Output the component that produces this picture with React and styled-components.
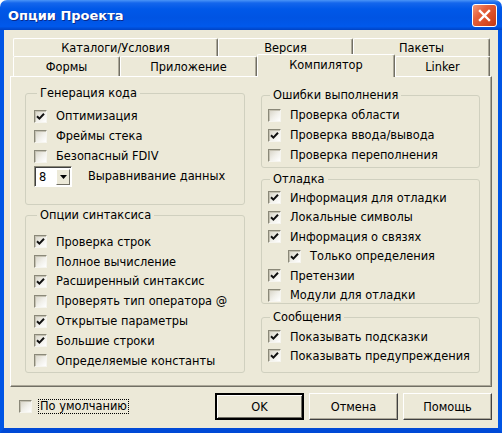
import React from 'react';
import styled, { createGlobalStyle } from 'styled-components';

const Global = createGlobalStyle`
  html, body { margin: 0; padding: 0; background: #ffffff; }
  body {
    font-family: "DejaVu Sans", "Noto Sans", sans-serif;
    font-size: 11.4px;
    color: #000;
  }
  * { box-sizing: border-box; }
`;

const Window = styled.div`
  width: 502px;
  height: 433px;
  display: flex;
  flex-direction: column;
`;

const TitleBar = styled.div`
  height: 30px;
  flex: none;
  display: flex;
  align-items: center;
  justify-content: space-between;
  padding: 0 5px 0 8px;
  border-radius: 7px 7px 0 0;
  background: linear-gradient(
    to bottom,
    #4a94f7 0%,
    #1466ec 10%,
    #0058e8 30%,
    #0054e3 60%,
    #0059ec 88%,
    #0043c4 100%
  );
`;

const Title = styled.span`
  color: #fff;
  font-family: "DejaVu Sans", sans-serif;
  font-weight: bold;
  font-size: 13px;
  text-shadow: 1px 1px 0 #0b2a8a;
`;

const CloseBtn = styled.div`
  width: 25px;
  height: 23px;
  border: 1px solid #fff;
  border-radius: 3px;
  display: flex;
  align-items: center;
  justify-content: center;
  background: linear-gradient(135deg, #f39a7c 0%, #e5613d 35%, #d84a22 70%, #c23a17 100%);
`;

const Frame = styled.div`
  flex: 1;
  display: flex;
  flex-direction: column;
  background: #ece9d8;
  border-left: 4px solid #0055e5;
  border-right: 4px solid #0055e5;
  border-bottom: 5px solid #0049d6;
  padding: 8px 6px 0 6px;
`;

const TabRow = styled.div`
  display: flex;
  height: ${(p) => p.$h}px;
  padding: 0 2px 0 3px;
`;

const Tab = styled.div`
  width: ${(p) => p.$w}px;
  height: ${(p) => p.$h}px;
  display: flex;
  align-items: center;
  justify-content: center;
  background: #ece9d8;
  border-top: 1px solid #fff;
  border-left: 1px solid #fff;
  border-right: 1px solid #716f64;
  box-shadow: inset -1px 0 0 #aca899;
  border-radius: 2px 2px 0 0;
  white-space: nowrap;
`;

const ActiveTab = styled(Tab)`
  align-self: flex-start;
  height: 23px;
  margin-top: -2px;
  padding-bottom: 3px;
  position: relative;
  z-index: 1;
`;

const Page = styled.div`
  height: 311px;
  border: 1px solid;
  border-color: #fff #716f64 #716f64 #fff;
  box-shadow: inset -1px -1px 0 #aca899;
  display: grid;
  grid-template-columns: 220px 219px;
  column-gap: 16px;
  padding: 9px 11px 0 14px;
`;

const Column = styled.div`
  display: flex;
  flex-direction: column;
  gap: ${(p) => p.$gap}px;
  padding-top: ${(p) => p.$top || 0}px;
`;

const Group = styled.fieldset`
  margin: 0;
  margin-top: ${(p) => p.$mt || 0}px;
  padding: 0;
  min-width: 0;
  height: ${(p) => p.$h}px;
  border: 1px solid #d0d0bf;
  border-radius: 3px;
`;

const Legend = styled.legend`
  padding: 0 3px;
  margin-left: ${(p) => p.$ml}px;
  line-height: 14px;
`;

const GroupBody = styled.div`
  display: flex;
  flex-direction: column;
  padding: ${(p) => p.$pt}px 0 0 ${(p) => p.$pl}px;
`;

const Row = styled.div`
  display: flex;
  align-items: center;
  height: ${(p) => p.$h}px;
  padding-left: ${(p) => p.$indent || 0}px;
  gap: ${(p) => p.$gap || 9}px;
  white-space: nowrap;
`;

const Box = styled.span`
  width: 13px;
  height: 13px;
  flex: none;
  display: flex;
  align-items: center;
  justify-content: center;
  border: 1px solid;
  border-color: #8a8878 #f6f5ef #f6f5ef #8a8878;
  box-shadow: inset 1px 1px 0 #c4c1b2;
  background: linear-gradient(135deg, #d6d3c5 0%, #f1f0ea 55%, #ffffff 100%);
`;

const Combo = styled.div`
  width: 38px;
  height: 21px;
  flex: none;
  display: flex;
  align-items: stretch;
  background: #fff;
  border: 1px solid;
  border-color: #8a8878 #fff #fff #8a8878;
  box-shadow: inset 1px 1px 0 #404040;
  padding: 2px 1px 1px 2px;
`;

const ComboText = styled.span`
  flex: 1;
  display: flex;
  align-items: center;
  padding-left: 2px;
`;

const ComboBtn = styled.span`
  width: 14px;
  display: flex;
  align-items: center;
  justify-content: center;
  background: #ece9d8;
  border: 1px solid;
  border-color: #fff #716f64 #716f64 #fff;
`;

const ComboLabel = styled.span`
  margin-left: 7px;
  padding-bottom: 2px;
`;

const Footer = styled.div`
  flex: 1;
  display: flex;
  align-items: flex-start;
  padding: 6px 0 0 9px;
`;

const FooterCheck = styled.div`
  height: 27px;
  display: flex;
  align-items: center;
  gap: 6px;
`;

const FocusLabel = styled.span`
  border: 1px dotted #000;
  padding: 0 1px;
  line-height: 13px;
`;

const Buttons = styled.div`
  margin-left: auto;
  display: flex;
  gap: 5px;
`;

const Button = styled.div`
  width: 89px;
  height: 27px;
  display: flex;
  align-items: center;
  justify-content: center;
  background: #ece9d8;
  border: 1px solid;
  border-color: #fff #404040 #404040 #fff;
  box-shadow: inset -1px -1px 0 #aca899;
`;

const DefaultButton = styled(Button)`
  border: 2px solid #000;
  box-shadow: inset 1px 1px 0 #fff, inset -1px -1px 0 #716f64;
`;

function Check({ checked }) {
  return (
    <Box>
      {checked && (
        <svg width="9" height="9" viewBox="0 0 9 9">
          <path d="M1 4.2 L3.4 6.6 L8 1.8" stroke="#111" strokeWidth="2" fill="none" />
        </svg>
      )}
    </Box>
  );
}

function Item({ checked, children, h, indent }) {
  return (
    <Row $h={h} $indent={indent}>
      <Check checked={checked} />
      <span>{children}</span>
    </Row>
  );
}

const codeGen = [
  ['Оптимизация', true],
  ['Фреймы стека', false],
  ['Безопасный FDIV', false],
];

const syntax = [
  ['Проверка строк', true],
  ['Полное вычисление', false],
  ['Расширенный синтаксис', true],
  ['Проверять тип оператора @', false],
  ['Открытые параметры', true],
  ['Большие строки', true],
  ['Определяемые константы', false],
];

const runtime = [
  ['Проверка области', false],
  ['Проверка ввода/вывода', true],
  ['Проверка переполнения', false],
];

const debug = [
  ['Информация для отладки', true, 0],
  ['Локальные символы', true, 0],
  ['Информация о связях', true, 0],
  ['Только определения', true, 20],
  ['Претензии', true, 0],
  ['Модули для отладки', false, 0],
];

const messages = [
  ['Показывать подсказки', true],
  ['Показывать предупреждения', true],
];

export default function App() {
  return (
    <Window>
      <Global />
      <TitleBar>
        <Title>Опции Проекта</Title>
        <CloseBtn>
          <svg width="13" height="13" viewBox="0 0 13 13">
            <path d="M2 2 L11 11 M11 2 L2 11" stroke="#fff" strokeWidth="2.4" strokeLinecap="square" />
          </svg>
        </CloseBtn>
      </TitleBar>
      <Frame>
        <TabRow $h={18}>
          <Tab $w={205} $h={18}>Каталоги/Условия</Tab>
          <Tab $w={135} $h={18}>Версия</Tab>
          <Tab $w={137} $h={18}>Пакеты</Tab>
        </TabRow>
        <TabRow $h={20}>
          <Tab $w={107} $h={20}>Формы</Tab>
          <Tab $w={137} $h={20}>Приложение</Tab>
          <ActiveTab $w={138}>Компилятор</ActiveTab>
          <Tab $w={95} $h={20}>Linker</Tab>
        </TabRow>
        <Page>
          <Column $gap={3}>
            <Group $h={119}>
              <Legend $ml={11}>Генерация кода</Legend>
              <GroupBody $pt={6} $pl={8}>
                {codeGen.map(([t, c]) => (
                  <Item key={t} checked={c} h={20}>{t}</Item>
                ))}
                <Row $h={21} $gap={9}>
                  <Combo>
                    <ComboText>8</ComboText>
                    <ComboBtn>
                      <svg width="7" height="4" viewBox="0 0 7 4">
                        <path d="M0 0 H7 L3.5 4 Z" fill="#000" />
                      </svg>
                    </ComboBtn>
                  </Combo>
                  <ComboLabel>Выравнивание данных</ComboLabel>
                </Row>
              </GroupBody>
            </Group>
            <Group $h={165}>
              <Legend $ml={11}>Опции синтаксиса</Legend>
              <GroupBody $pt={10} $pl={8}>
                {syntax.map(([t, c]) => (
                  <Item key={t} checked={c} h={19.8}>{t}</Item>
                ))}
              </GroupBody>
            </Group>
          </Column>
          <Column $gap={4} $top={2}>
            <Group $h={80}>
              <Legend $ml={8}>Ошибки выполнения</Legend>
              <GroupBody $pt={3} $pl={6}>
                {runtime.map(([t, c]) => (
                  <Item key={t} checked={c} h={20}>{t}</Item>
                ))}
              </GroupBody>
            </Group>
            <Group $h={132}>
              <Legend $ml={8}>Отладка</Legend>
              <GroupBody $pt={2} $pl={6}>
                {debug.map(([t, c, i]) => (
                  <Item key={t} checked={c} h={19.5} indent={i}>{t}</Item>
                ))}
              </GroupBody>
            </Group>
            <Group $h={63} $mt={2}>
              <Legend $ml={8}>Сообщения</Legend>
              <GroupBody $pt={3} $pl={6}>
                {messages.map(([t, c]) => (
                  <Item key={t} checked={c} h={19}>{t}</Item>
                ))}
              </GroupBody>
            </Group>
          </Column>
        </Page>
        <Footer>
          <FooterCheck>
            <Check checked={false} />
            <FocusLabel>По умолчанию</FocusLabel>
          </FooterCheck>
          <Buttons>
            <DefaultButton>OK</DefaultButton>
            <Button>Отмена</Button>
            <Button>Помощь</Button>
          </Buttons>
        </Footer>
      </Frame>
    </Window>
  );
}
